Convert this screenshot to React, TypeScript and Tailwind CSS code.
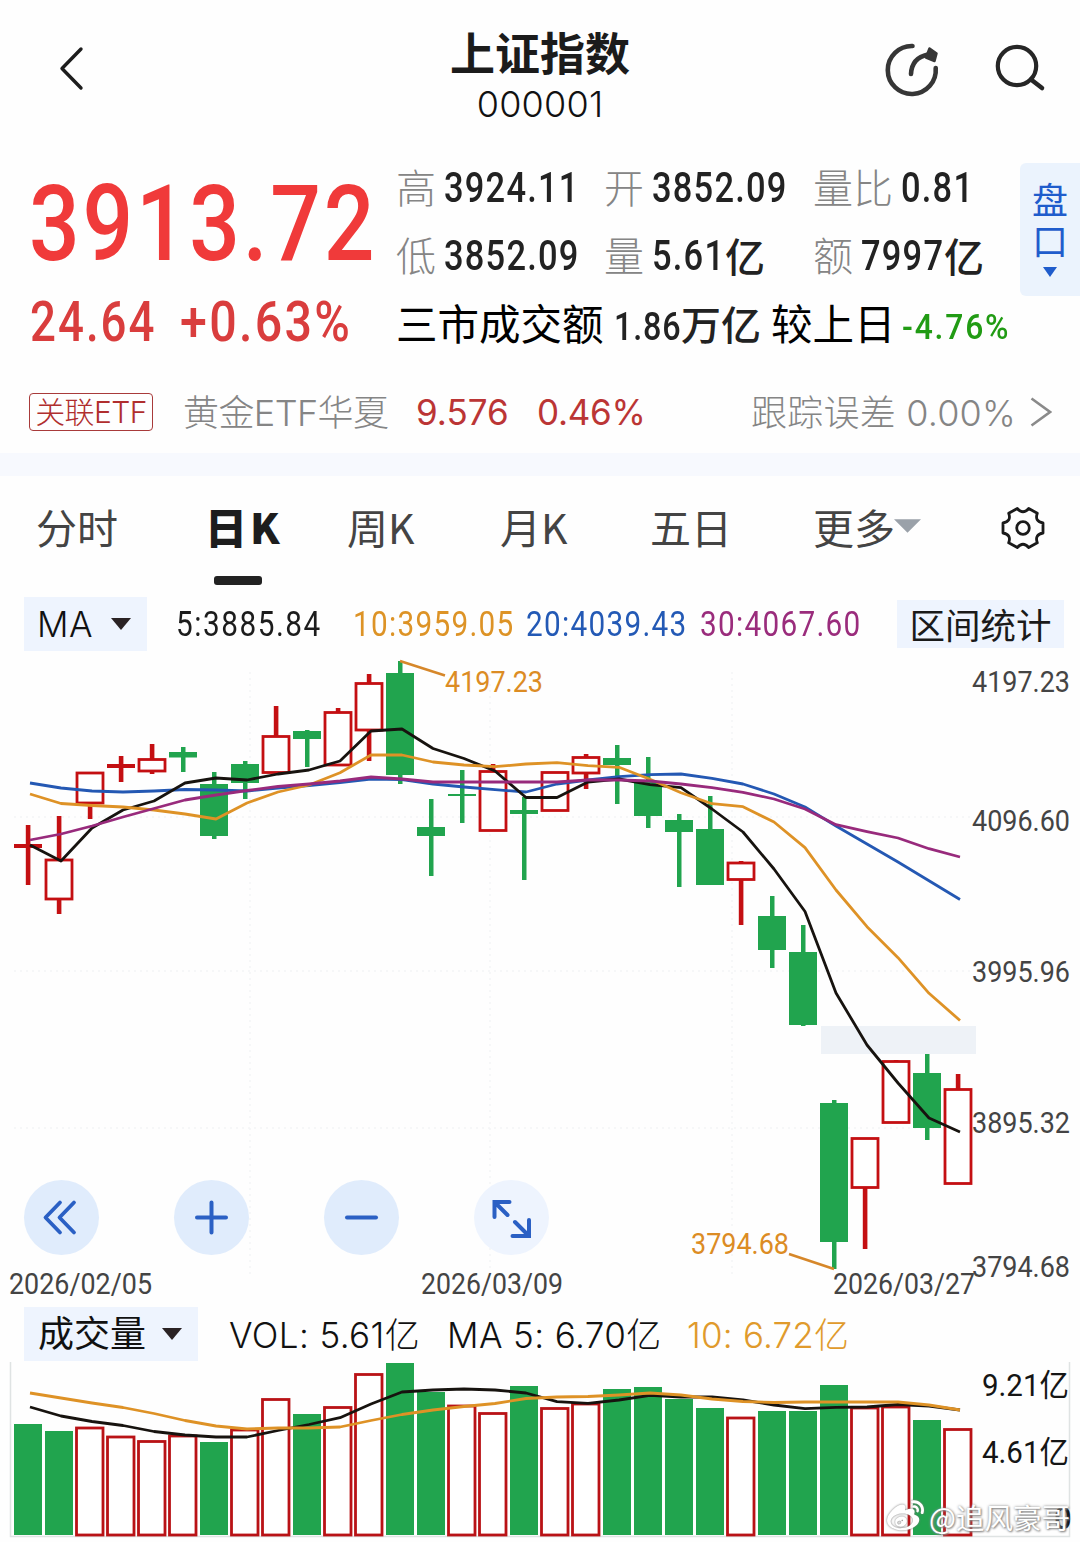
import React from 'react';
import { FaWeibo } from 'react-icons/fa';

const GREEN = '#21a44e';
const RED = '#c40f12';

// [direction, high, body top, body bottom, low]
type Candle = ['r' | 'g', number, number, number, number];

const CANDLES: Candle[] = [
  ['r', 825, 844, 848, 885],
  ['r', 816, 859, 900, 914],
  ['r', 772, 772, 804, 819],
  ['r', 756, 764, 768, 782],
  ['r', 744, 758.5, 772, 774],
  ['g', 747, 752, 757.5, 772],
  ['g', 772, 784, 836, 839],
  ['g', 761, 764, 783, 799],
  ['r', 706, 735.5, 773.5, 773],
  ['g', 730, 731, 739, 767],
  ['r', 708, 711.5, 766, 765],
  ['r', 674, 682.5, 731, 761],
  ['g', 661, 673, 775, 784],
  ['g', 799, 827, 836, 876],
  ['g', 770, 794, 796, 823],
  ['r', 764, 770.5, 831.5, 831],
  ['g', 797, 810, 814, 880],
  ['r', 772, 771.5, 811.5, 811],
  ['r', 754, 756.5, 774, 789],
  ['g', 745, 758, 765, 804],
  ['g', 757, 781, 816, 828],
  ['g', 814, 820, 832, 887],
  ['g', 796, 829, 885, 885],
  ['r', 861, 862, 880.5, 925],
  ['g', 896, 916, 950, 968],
  ['g', 925, 952, 1025, 1026],
  ['g', 1100, 1103, 1242, 1269],
  ['r', 1138, 1137.5, 1188.5, 1249],
  ['r', 1060, 1060.5, 1123.5, 1123],
  ['g', 1054, 1073, 1128, 1140],
  ['r', 1074, 1088.5, 1184.5, 1184],
];

const VOLUME_TOPS = [
  1424, 1431, 1427, 1436, 1440.5, 1435, 1442, 1429, 1398.5, 1414, 1406.5, 1373.5, 1363, 1392, 1405, 1412.5,
  1386, 1407.5, 1403, 1389, 1387, 1399, 1408, 1417, 1411, 1411, 1385, 1407, 1406, 1420, 1428.5,
];

// volume colours run against the candles on a few days
const VOLUME_COLORS = 'ggrrrrgrrgrrggrrgrrggggrgggrrgr';

const PRICE_LINES = [
  {
    color: '#2458b3',
    ys: [783, 788, 791, 792, 791, 789.5, 790, 791, 788, 785.5, 782.5, 779, 779.5, 784, 787, 789.7, 792, 784, 780, 776.7, 774.7, 774, 778.3, 784, 794, 807, 826, 844, 862, 880.7, 899.5],
  },
  {
    color: '#17130f',
    ys: [845, 861, 828, 810, 801, 783, 778, 780, 774, 770, 761, 731, 729, 748.5, 758.5, 771, 797.5, 797.5, 782, 779, 784.7, 787.7, 809, 832, 869, 911.5, 993, 1045, 1083, 1118, 1132],
  },
  {
    color: '#de9226',
    ys: [794, 803.5, 805.5, 807, 810, 814, 819, 803, 792, 785, 772.7, 755, 755, 762, 765, 766.7, 764, 762.7, 765.7, 767.3, 779.3, 792.7, 803.7, 806.7, 822, 847.7, 890, 926.7, 957.7, 993.3, 1020.5],
  },
  {
    color: '#982a7c',
    ys: [840, 834, 826, 817, 808.5, 800, 795, 790.5, 786.5, 784, 781, 777, 779, 782, 782, 782, 782, 782, 780, 780, 781, 784, 787.7, 792.3, 799, 809, 824.7, 831.7, 838, 848.7, 857],
  },
];

const VOLUME_LINES = [
  {
    color: '#17130f',
    ys: [1407, 1416, 1421.5, 1425.5, 1431.5, 1435, 1437, 1437, 1430.5, 1424.5, 1417.7, 1404, 1392, 1390, 1389, 1390, 1393, 1401.7, 1403.3, 1400, 1395.3, 1397, 1397, 1400, 1405, 1408.7, 1407.3, 1407, 1404.5, 1406, 1410],
  },
  {
    color: '#de9226',
    ys: [1393, 1398, 1403, 1407.5, 1413.5, 1420.5, 1426, 1429, 1428, 1428, 1427, 1420.5, 1414.5, 1410, 1406.5, 1403.5, 1398.5, 1397, 1396.5, 1395, 1393, 1395, 1399, 1401.5, 1402.5, 1402, 1402, 1402, 1402, 1405, 1410],
  },
];

const PRICE_LABELS = [
  { y: 691.5, text: '4197.23' },
  { y: 831, text: '4096.60' },
  { y: 982, text: '3995.96' },
  { y: 1133, text: '3895.32' },
  { y: 1277, text: '3794.68' },
];

const toPoints = (ys: number[]) => ys.map((y, i) => `${30 + i * 31},${y}`).join(' ');

// Roboto squeezed towards the narrow figures used on quote boards
const Num: React.FC<{ box: string; className: string; children: React.ReactNode }> = ({ box, className, children }) => (
  <span className={`inline-block shrink-0 whitespace-nowrap leading-none ${box}`}>
    <span className={`inline-block origin-left font-['Roboto','Noto_Sans_CJK_SC',sans-serif] ${className}`}>{children}</span>
  </span>
);

const Stat: React.FC<{ label: string; value: string; box: string; unit?: string }> = ({ label, value, box, unit }) => (
  <div className="flex h-[68px] items-center">
    <span className="mr-[8px] pb-[5px] text-[40px] font-light leading-none text-[#858585]">{label}</span>
    <Num box={box} className="scale-x-[.82] text-[42px] font-medium tracking-[1.5px] text-[#222]">{value}</Num>
    {unit && <span className="pb-[3px] text-[40px] font-medium leading-none text-[#222]">{unit}</span>}
  </div>
);

const Header = () => (
  <header className="flex h-[150px] items-start justify-between pl-[58px] pr-[32px]">
    <svg className="mt-[45px] h-[48px] w-[140px]" viewBox="58 45 140 48" fill="none" stroke="#1d1d1d" strokeWidth="3.4" strokeLinecap="round" strokeLinejoin="round">
      <path d="M81 49 62 68.500 81 88" />
    </svg>
    <div className="flex w-[200px] flex-col items-center pt-[29px]">
      <h1 className="text-[45px] font-bold leading-[46px] text-[#1b1b1b]">上证指数</h1>
      <div className="mt-[10px] font-['Inter',sans-serif] text-[36px] font-light leading-[38px] tracking-[0.2px] text-[#111]">000001</div>
    </div>
    <svg className="mt-[38px] h-[64px] w-[166px]" viewBox="882 38 166 64" fill="none" stroke="#262626" strokeLinecap="round">
      <path d="M912.500 46A24 24 0 1 0 935.700 68" strokeWidth="4.600" stroke="#363636" />
      <path d="M911 74C911.500 64 916 57 928 54.500" strokeWidth="4.600" stroke="#363636" />
      <path d="M929.500 48.500 936.500 53.500 934.500 61 926 57.500Z" fill="#363636" stroke="#363636" strokeWidth="2.500" strokeLinejoin="round" />
      <circle cx="1017" cy="66" r="19.200" strokeWidth="4.200" />
      <path d="M1031 79.500 1042 88" strokeWidth="4.600" />
    </svg>
  </header>
);

const Quote = () => (
  <section className="flex h-[220px] pl-[30px]">
    <div className="w-[366px] shrink-0">
      <div className="flex h-[142px] items-center pt-[6px]">
        <Num box="w-[350px]" className="-ml-px scale-x-[.85] text-[105px] font-medium tracking-[3.2px] text-[#f03a3a]">3913.72</Num>
      </div>
      <div className="flex h-[60px] items-center">
        <Num box="w-[150px]" className="scale-x-[.83] text-[55px] font-medium tracking-[2.4px] text-[#d93d3d]">24.64</Num>
        <Num box="w-[172px]" className="scale-x-[.88] text-[55px] font-medium tracking-[2.600px] text-[#d93d3d]">+0.63%</Num>
      </div>
    </div>
    <div className="w-[624px] shrink-0 pt-[4px]">
      <div className="grid grid-cols-[208px_209px_207px]">
        <Stat label="高" value="3924.11" box="w-[140px]" />
        <Stat label="开" value="3852.09" box="w-[140px]" />
        <Stat label="量比" value="0.81" box="w-[80px]" />
        <Stat label="低" value="3852.09" box="w-[140px]" />
        <Stat label="量" value="5.61" box="w-[73px]" unit="亿" />
        <Stat label="额" value="7997" box="w-[83px]" unit="亿" />
      </div>
      <div className="flex h-[66px] items-center text-[41.500px] leading-none text-black">
        <span className="w-[218px] shrink-0">三市成交额</span>
        <Num box="mt-[2px] w-[67px]" className="scale-x-[.83] text-[39px] font-medium tracking-[1px] text-[#222]">1.86</Num>
        <span className="w-[90px] shrink-0 text-[40px] font-medium text-[#222]">万亿</span>
        <span className="w-[131px] shrink-0">较上日</span>
        <Num box="w-[110px]" className="scale-x-[.91] text-[35px] font-medium tracking-[2px] text-[#219b14]">-4.76%</Num>
      </div>
    </div>
    <button className="mt-[13px] flex h-[133px] w-[60px] shrink-0 flex-col items-center rounded-l-md bg-[#ebf3fd] pt-[15px] text-[36px] leading-[41px] text-[#1f5ccc]">
      <span>盘</span>
      <span>口</span>
      <svg className="mt-[7px] h-[10px] w-[14px]" viewBox="0 0 14 10"><path d="M0 0H14L7 10Z" fill="#1f5ccc" /></svg>
    </button>
  </section>
);

const RelatedEtf = () => (
  <section className="flex h-[83px] items-center pl-[29px] pr-[28px] font-['Inter','Noto_Sans_CJK_SC',sans-serif] font-light">
    <span className="flex h-[38px] w-[124px] items-center justify-center whitespace-nowrap rounded border-[1.5px] border-[#a83a3a] text-[30px] leading-none tracking-[-0.6px] text-[#b02e2e]">关联ETF</span>
    <span className="ml-[30px] w-[233px] whitespace-nowrap pt-[3px] text-[36px] tracking-[-0.6px] text-[#858585]">黄金ETF华夏</span>
    <span className="w-[121px] pt-[2px] text-[35px] font-normal text-[#bb3535]">9.576</span>
    <span className="w-[120px] pt-[2px] text-[35px] font-normal tracking-[-0.3px] text-[#bb3535]">0.46%</span>
    <span className="ml-auto whitespace-nowrap pt-[3px] text-[36px] tracking-[0.200px] text-[#858585]">跟踪误差 0.00%</span>
    <svg className="ml-[14px] h-[30px] w-[22px]" viewBox="0 0 22 30" fill="none" stroke="#8a8a8a" strokeWidth="2.600"><path d="M1.500 1.500 20 15 1.500 28.500" /></svg>
  </section>
);

const Tabs = () => (
  <nav className="flex h-[121px] items-start pl-[36px] pt-[26px] text-[41px] leading-[48px] text-[#444]">
    <span className="w-[169px] shrink-0">分时</span>
    <span className="flex w-[142px] shrink-0 flex-col items-start font-black text-[#1d1d1d]">
      <span className="text-[42px] tracking-[3px]">日K</span>
      <span className="ml-[9px] mt-[26px] h-[9px] w-[48px] rounded-[3px] bg-[#222]"></span>
    </span>
    <span className="w-[153px] shrink-0">周K</span>
    <span className="w-[150px] shrink-0">月K</span>
    <span className="w-[163px] shrink-0">五日</span>
    <span className="flex w-[187px] shrink-0 items-center">
      更多
      <svg className="-ml-px h-[14px] w-[27px]" viewBox="0 0 28 14"><path d="M0 0H28L14 14Z" fill="#9aa1a9" /></svg>
    </span>
    <svg className="mt-[4px] h-[44px] w-[46px]" viewBox="0 0 46 44" fill="none" stroke="#1a1a1a" strokeWidth="2.800" strokeLinejoin="round">
      <path d="M43 17V27Q34.300 28.500 37.300 36.800L28.700 41.500Q23 35 17.300 41.500L8.700 36.800Q11.700 28.500 3 27V17Q11.700 15.500 8.700 7.200L17.300 2.500Q23 9 28.700 2.500L37.300 7.200Q34.300 15.500 43 17Z" />
      <circle cx="23" cy="22" r="6.300" />
    </svg>
  </nav>
);

const MaBar = () => (
  <div className="flex h-[54px] items-center pl-[24px]">
    <button className="flex h-[54px] w-[123px] shrink-0 items-center bg-[#eef4fe] pl-[13px] text-left font-['Inter',sans-serif] text-[35px] font-light text-[#111]">
      <span className="w-[74px] tracking-[0.600px]">MA</span>
      <svg className="h-[12px] w-[20px]" viewBox="0 0 20 12"><path d="M0 0H20L10 12Z" fill="#2a2224" /></svg>
    </button>
    <div className="ml-[29px] flex">
      <Num box="w-[177px]" className="scale-x-[.85] text-[35px] tracking-[1.8px] text-[#1c1c1c]">5:3885.84</Num>
      <Num box="w-[173px]" className="scale-x-[.85] text-[35px] tracking-[1.5px] text-[#dd9326]">10:3959.05</Num>
      <Num box="w-[174px]" className="scale-x-[.85] text-[35px] tracking-[1.5px] text-[#2359b5]">20:4039.43</Num>
      <Num box="w-[160px]" className="scale-x-[.85] text-[35px] tracking-[1.5px] text-[#9a2c7c]">30:4067.60</Num>
    </div>
    <button className="ml-[37px] h-[48px] w-[167px] bg-[#eef4fe] text-[35.500px] leading-none text-[#1a1a1a]">区间统计</button>
  </div>
);

const PriceChart = () => (
  <div className="relative h-[654px]">
    <svg className="block h-[654px] w-[1080px] font-['Roboto',sans-serif]" viewBox="0 651 1080 654">
      <g stroke="#f3f5f6" strokeWidth="1.500" strokeDasharray="2 4">
        {[250, 490, 732].map((x) => <path key={x} d={`M${x} 672V1275`} />)}
        {[817, 971, 1128].map((y) => <path key={y} d={`M14 ${y}H972`} />)}
      </g>
      <rect x="821" y="1026" width="155" height="28" fill="#eef2f7" />
      {CANDLES.map(([dir, high, top, bottom, low], i) => {
        const x = 28 + i * 31;
        if (dir === 'g') {
          return (
            <g key={i} fill={GREEN}>
              <rect x={x - 2} y={high} width="4.500" height={low - high} />
              <rect x={x - 14} y={top} width="28" height={bottom - top} />
            </g>
          );
        }
        return (
          <g key={i}>
            <rect x={x - 2.2} y={high} width="4.600" height={Math.max(low - high, 0)} fill={RED} />
            {bottom - top < 6 ? (
              <rect x={x - 14} y={top} width="28" height={bottom - top} fill={RED} />
            ) : (
              <rect x={x - 13} y={top + 1} width="26" height={bottom - top - 2} fill="#fff" stroke={RED} strokeWidth="2.800" />
            )}
          </g>
        );
      })}
      {PRICE_LINES.map((line) => (
        <polyline key={line.color} points={toPoints(line.ys)} fill="none" stroke={line.color} strokeWidth="2.800" strokeLinejoin="round" />
      ))}
      <g stroke="#d6872a" strokeWidth="2.600">
        <path d="M400 661 445 675.500" />
        <path d="M789 1254 834 1269" />
      </g>
      <g fill="#dc8c24" fontSize="29">
        <text x="445" y="691.500" textLength="98" lengthAdjust="spacingAndGlyphs">4197.23</text>
        <text x="691" y="1253.500" textLength="98" lengthAdjust="spacingAndGlyphs">3794.68</text>
      </g>
      <g fill="#444" fontSize="29">
        {PRICE_LABELS.map((label) => (
          <text key={label.text} x="972" y={label.y} textLength="98" lengthAdjust="spacingAndGlyphs">{label.text}</text>
        ))}
        <text x="9" y="1293.500" textLength="143" lengthAdjust="spacingAndGlyphs">2026/02/05</text>
        <text x="421" y="1293.500" textLength="142" lengthAdjust="spacingAndGlyphs">2026/03/09</text>
        <text x="833" y="1293.500" textLength="142" lengthAdjust="spacingAndGlyphs">2026/03/27</text>
      </g>
    </svg>
    <div className="absolute left-[24px] top-[529px] flex gap-[75px]">
      <button className="h-[75px] w-[75px] rounded-full bg-[#e0ecfc]">
        <svg viewBox="0 0 75 75" fill="none" stroke="#2b60c4" strokeWidth="3.800" strokeLinecap="round" strokeLinejoin="round">
          <path d="M36 22.500 21.500 37.500 36 52.500M50 22.500 35.500 37.500 50 52.500" />
        </svg>
      </button>
      <button className="h-[75px] w-[75px] rounded-full bg-[#e0ecfc]">
        <svg viewBox="0 0 75 75" stroke="#2b60c4" strokeWidth="4" strokeLinecap="round">
          <path d="M23 37.500H52M37.500 22.500V52.500" />
        </svg>
      </button>
      <button className="h-[75px] w-[75px] rounded-full bg-[#e0ecfc]">
        <svg viewBox="0 0 75 75" stroke="#2b60c4" strokeWidth="4" strokeLinecap="round">
          <path d="M23 37.500H52" />
        </svg>
      </button>
      <button className="h-[75px] w-[75px] rounded-full bg-[#eef4fe]">
        <svg viewBox="0 0 75 75" fill="none" stroke="#2b60c4" strokeWidth="4" strokeLinecap="round" strokeLinejoin="miter">
          <path d="M20.500 37V22H35.500M21.500 23 33.500 35M55 40V56H38.500M54 55 41 42" />
        </svg>
      </button>
    </div>
  </div>
);

const VolumeBar = () => (
  <div className="flex h-[57px] items-center pl-[24px] font-['Inter','Noto_Sans_CJK_SC',sans-serif] text-[35px] font-light text-[#111]">
    <button className="flex h-[54px] w-[174px] shrink-0 items-center bg-[#eef4fe] pl-[14px] text-left text-[36px] font-normal">
      <span className="w-[124px]">成交量</span>
      <svg className="h-[12px] w-[20px]" viewBox="0 0 20 12"><path d="M0 0H20L10 12Z" fill="#2a2224" /></svg>
    </button>
    <span className="ml-[31px] w-[218px] whitespace-nowrap pt-[4px] tracking-[0.400px]">VOL: 5.61亿</span>
    <span className="w-[240px] whitespace-nowrap pt-[4px] tracking-[0.400px]">MA 5: 6.70亿</span>
    <span className="whitespace-nowrap pt-[4px] tracking-[0.200px] text-[#e09a2c]">10: 6.72亿</span>
  </div>
);

const VolumeChart = () => (
  <div className="relative h-[180px]">
    <svg className="block h-[180px] w-[1080px] font-['Roboto','Noto_Sans_CJK_SC',sans-serif]" viewBox="0 1362 1080 180">
      <path d="M10.500 1362V1536.500H1069.500V1362" fill="none" stroke="#dfe3e3" strokeWidth="1.500" />
      {VOLUME_TOPS.map((top, i) => {
        const x = 14 + i * 31;
        return VOLUME_COLORS[i] === 'g' ? (
          <rect key={i} x={x} y={top} width="28" height={1535 - top} fill={GREEN} />
        ) : (
          <rect key={i} x={x + 0.5} y={top + 1} width="26.500" height={1534 - top} fill="#fff" stroke="#b91216" strokeWidth="2.800" />
        );
      })}
      {VOLUME_LINES.map((line) => (
        <polyline key={line.color} points={toPoints(line.ys)} fill="none" stroke={line.color} strokeWidth="2.800" strokeLinejoin="round" />
      ))}
      <g fill="#151515" fontSize="31">
        <text x="982" y="1396" textLength="87" lengthAdjust="spacingAndGlyphs">9.21亿</text>
        <text x="982" y="1463" textLength="87" lengthAdjust="spacingAndGlyphs">4.61亿</text>
        <text x="1054" y="1529" fontWeight="500">0</text>
      </g>
    </svg>
    <div className="absolute right-[10px] top-[136px] flex items-center gap-[5px] text-white [text-shadow:0_0_3px_#888,1px_1px_2px_#888]">
      <FaWeibo className="h-[37px] w-[37px] drop-shadow-[0_0_1px_#777]" />
      <span className="text-[28.500px] leading-[37px]">@追风豪哥</span>
    </div>
  </div>
);

const App: React.FC = () => {
  return (
    <main className="h-[1542px] w-[1080px] overflow-hidden bg-[#fefefe] font-['Noto_Sans_CJK_SC',sans-serif]">
      <Header />
      <Quote />
      <RelatedEtf />
      <div className="h-[23px] bg-[#f7f9fe]"></div>
      <Tabs />
      <MaBar />
      <PriceChart />
      <VolumeBar />
      <VolumeChart />
    </main>
  );
};

export default App;
